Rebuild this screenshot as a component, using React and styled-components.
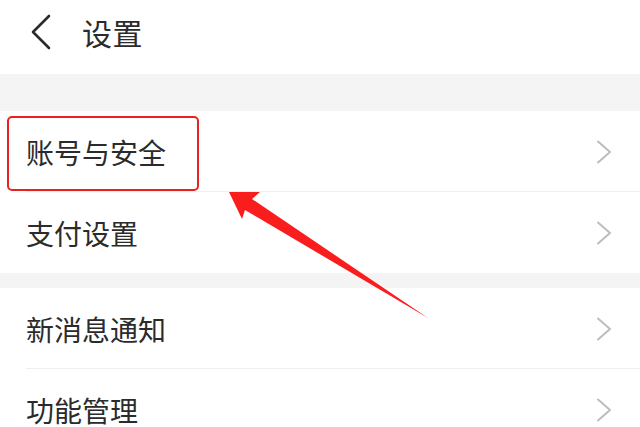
import React from "react";
import styled, { createGlobalStyle } from "styled-components";

const GlobalStyle = createGlobalStyle`
  html, body {
    margin: 0;
    padding: 0;
    background: #ffffff;
  }
  body {
    font-family: "Noto Sans CJK SC", "Noto Sans", sans-serif;
    color: #333333;
  }
`;

const Page = styled.div`
  position: relative;
  width: 640px;
  height: 427px;
  overflow: hidden;
  background: #f4f4f4;
`;

const Header = styled.div`
  display: flex;
  align-items: center;
  gap: 30px;
  height: 64px;
  padding: 0 0 10px 30px;
  background: #ffffff;
`;

const Title = styled.div`
  font-size: 30px;
  line-height: 1;
  color: #2b2b2b;
  letter-spacing: 0.5px;
`;

const Gap = styled.div`
  height: ${(p) => p.size}px;
`;

const Group = styled.div`
  background: #ffffff;
`;

const Row = styled.div`
  position: relative;
  display: flex;
  align-items: center;
  justify-content: space-between;
  height: 81px;
  padding: 0 28px 0 26px;
  box-sizing: border-box;

  &::after {
    content: "";
    display: ${(p) => (p.last ? "none" : "block")};
    position: absolute;
    left: 26px;
    right: 0;
    bottom: 0;
    height: 1px;
    background: #efefef;
  }
`;

const Label = styled.span`
  font-size: 28px;
  line-height: 1;
  color: #2b2b2b;
`;

const Highlight = styled.div`
  position: absolute;
  left: 7px;
  top: 5px;
  width: 192px;
  height: 75px;
  box-sizing: border-box;
  border: 2.5px solid #e8221f;
  border-radius: 5px;
  z-index: 1;
`;

const ArrowLayer = styled.svg`
  position: absolute;
  left: 0;
  top: 0;
  pointer-events: none;
`;

const BackIcon = () => (
  <svg width="22" height="36" viewBox="0 0 22 36">
    <polyline
      points="19,2 3,18 19,34"
      fill="none"
      stroke="#2b2b2b"
      strokeWidth="2.6"
      strokeLinecap="round"
      strokeLinejoin="round"
    />
  </svg>
);

const Chevron = () => (
  <svg width="16" height="24" viewBox="0 0 16 24">
    <polyline
      points="2,1.5 14,12 2,22.5"
      fill="none"
      stroke="#bdbdbd"
      strokeWidth="2"
      strokeLinecap="round"
      strokeLinejoin="round"
    />
  </svg>
);

const groups = [
  ["账号与安全", "支付设置"],
  ["新消息通知", "功能管理"],
];

export default function App() {
  return (
    <>
      <GlobalStyle />
      <Page>
        <Header>
          <BackIcon />
          <Title>设置</Title>
        </Header>
        <Gap size={37} />
        {groups.map((items, gi) => (
          <React.Fragment key={gi}>
            {gi > 0 && <Gap size={15} />}
            <Group>
              {items.map((name, i) => (
                <Row key={name} last={i === items.length - 1}>
                  <Label>{name}</Label>
                  <Chevron />
                  {gi === 0 && i === 0 && <Highlight />}
                </Row>
              ))}
            </Group>
          </React.Fragment>
        ))}
        <ArrowLayer width="640" height="427" viewBox="0 0 640 427">
          <polygon
            points="229,192 260,192 252,199 428,318 245,210 242,219"
            fill="#fa1d1d"
          />
        </ArrowLayer>
      </Page>
    </>
  );
}
